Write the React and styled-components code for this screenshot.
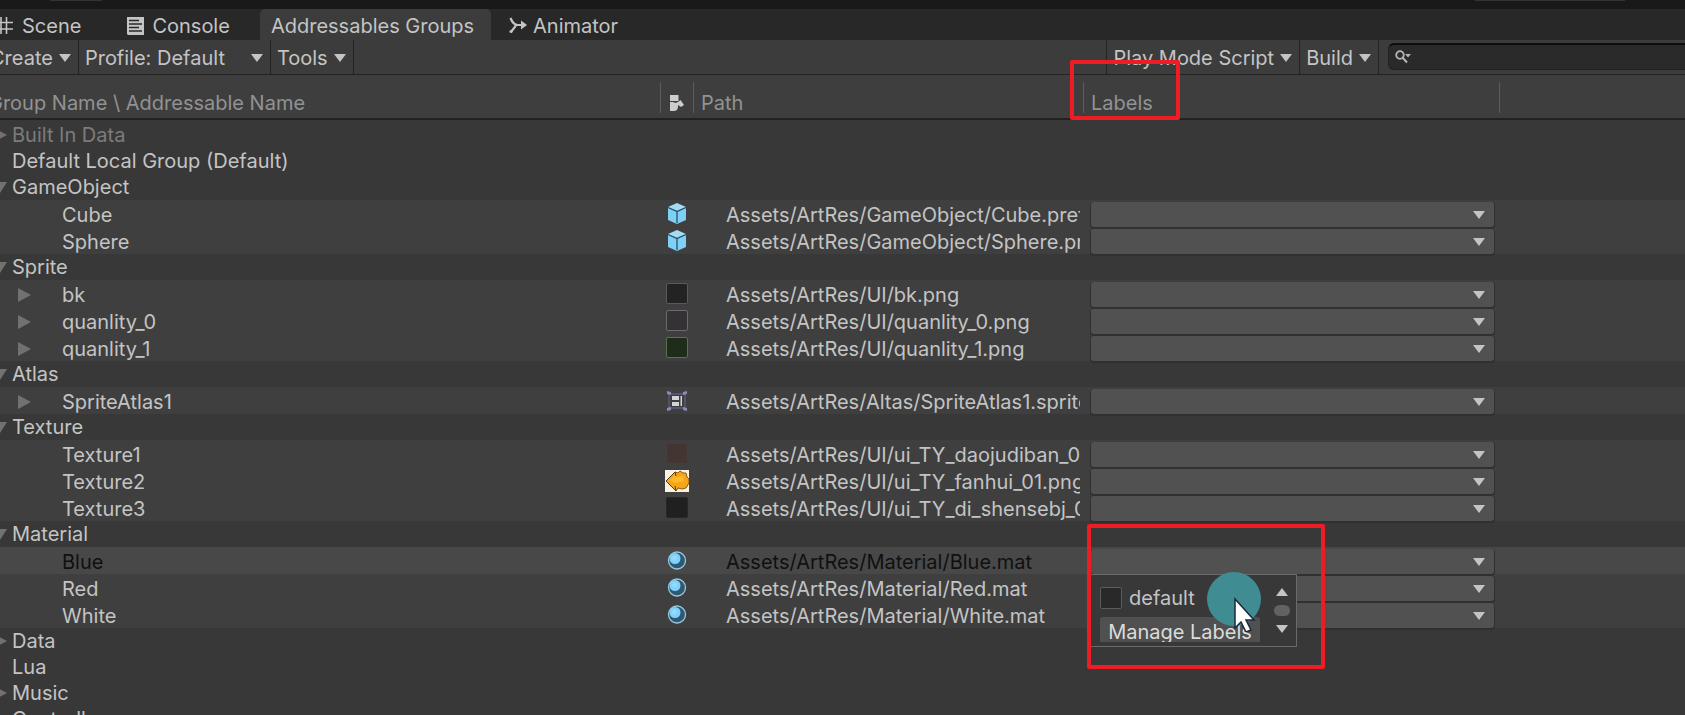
import React from "react";
import styled, { createGlobalStyle, css } from "styled-components";

const GlobalStyle = createGlobalStyle`
  body {
    margin: 0;
    background: #383838;
    overflow: hidden;
  }
  *, *::before, *::after { box-sizing: border-box; }
  button, input, select { font: inherit; color: inherit; }
`;

const Screen = styled.div`
  overflow: hidden;
  height: 100vh;
`;

const Panel = styled.div`
  margin-left: -16px;
  font-family: Inter, "Liberation Sans", sans-serif;
  font-size: 20px;
  line-height: 24px;
  color: #c4c4c4;
`;

const WindowEdge = styled.div`
  display: flex;
  justify-content: space-between;
  height: 9px;
  padding: 0 60px 0 66px;
  background: #191919;
`;

const EdgeTab = styled.span`
  width: ${(p) => p.$width}px;
  height: 1px;
  background: #333333;
`;

const TabBar = styled.nav`
  display: flex;
  height: 31px;
  background: #282828;
`;

const Tab = styled.button`
  display: flex;
  align-items: center;
  gap: ${(p) => p.$gap || 8}px;
  padding: 3px ${(p) => p.$end || 17}px 0 ${(p) => p.$start || 11}px;
  border: 0;
  border-radius: 5px 5px 0 0;
  background: ${(p) => (p.$active ? "#3c3c3c" : "transparent")};
  white-space: nowrap;
`;

const Toolbar = styled.div`
  display: flex;
  height: 35px;
  background: #3c3c3c;
  border-bottom: 1px solid #232323;
`;

const ToolButton = styled.button`
  display: flex;
  align-items: center;
  gap: 6px;
  padding: 2px 7px 0 6px;
  border: 0;
  border-right: 1px solid #232323;
  background: transparent;
  white-space: nowrap;
`;

const ProfileText = styled.span`
  margin-right: 20px;
`;

const Spacer = styled.div`
  flex: 1;
  border-right: 1px solid #232323;
`;

const SearchBox = styled.label`
  display: flex;
  align-items: center;
  gap: 4px;
  width: 321px;
  margin: 3px -24px 4px 9px;
  padding-left: 6px;
  border: 1px solid #212121;
  border-top: 2px solid #0d0d0d;
  border-radius: 6px;
  background: #2a2a2a;
`;

const SearchInput = styled.input`
  flex: 1;
  min-width: 0;
  border: 0;
  outline: 0;
  background: transparent;
`;

const Tree = styled.table`
  width: 100%;
  table-layout: fixed;
  border-collapse: separate;
  border-spacing: 0;
`;

const Col = styled.col`
  width: ${(p) => p.$width}px;
`;

const HeadCell = styled.th`
  position: relative;
  height: 45px;
  padding: 12px 0 0 ${(p) => (p.$first ? 4 : 8)}px;
  background: #3e3e3e;
  border-bottom: 2px solid #222222;
  color: #929292;
  font-weight: 400;
  text-align: left;
  white-space: nowrap;
  line-height: 24px;

  &:not(:first-child)::before {
    content: "";
    position: absolute;
    left: 0;
    top: 7px;
    width: 1px;
    height: 31px;
    background: #5c5c5c;
  }
  svg { display: block; margin-left: 2px; }
`;

const HeadGap = styled.tr`
  height: 2px;
`;

const cellBase = css`
  padding: 0;
  overflow: hidden;
  white-space: nowrap;
`;

const GroupRow = styled.tr`
  height: 26px;
  color: ${(p) => (p.$dim ? "#7c7c7c" : "inherit")};
`;

const EntryRow = styled.tr`
  height: 27px;
  background: ${(p) => (p.$selected ? "#484848" : "#3f3f3f")};
  color: ${(p) => (p.$selected ? "#101010" : "inherit")};
`;

const Cell = styled.td`
  ${cellBase}
`;

const GroupName = styled.div`
  display: flex;
  align-items: center;
  gap: 5px;
  height: 26px;
`;

const EntryName = styled.div`
  display: flex;
  align-items: center;
  gap: 31px;
  height: 27px;
  padding: 3px 0 0 32px;
`;

const Fold = styled.button`
  display: flex;
  justify-content: flex-end;
  width: ${(p) => (p.$entry ? 15 : 23)}px;
  padding: 0;
  border: 0;
  background: transparent;
`;

const IconBox = styled.div`
  display: flex;
  justify-content: center;
  align-items: center;
  height: 27px;
`;

const PathText = styled.div`
  height: 27px;
  margin: 0 3px 0 33px;
  padding-top: 3px;
  overflow: hidden;
  line-height: 24px;
`;

const LabelCell = styled.td`
  position: relative;
  padding: 0;
`;

const LabelBox = styled.div`
  display: flex;
  justify-content: flex-end;
  align-items: center;
  height: 27px;
  margin: 0 5px 0 8px;
  padding: 2px 0 0;
`;

const LabelSelect = styled.select`
  flex: 1;
  height: 25px;
  padding: 0 8px;
  appearance: none;
  border: 0;
  border-radius: 3px;
  background: #515151;
  box-shadow: 0 1px 0 1px #303030;
  outline: 0;
`;

const SelectArrow = styled.span`
  position: absolute;
  right: 14px;
  display: flex;
  pointer-events: none;
`;

const Popup = styled.div`
  position: absolute;
  z-index: 2;
  top: 27px;
  left: 7px;
  width: 207px;
  height: 73px;
  display: flex;
  justify-content: space-between;
  padding: 11px 6px 4px 9px;
  border: 1px solid #6a6a6a;
  background: #383838;
  color: #c4c4c4;
  overflow: hidden;
`;

const PopupList = styled.div`
  display: flex;
  flex-direction: column;
  gap: 8px;
  width: 160px;
  overflow: hidden;
`;

const Option = styled.label`
  display: flex;
  align-items: center;
  gap: 7px;
  height: 23px;
`;

const Check = styled.input`
  appearance: none;
  width: 22px;
  height: 22px;
  margin: 0;
  border: 1px solid #5c5c5c;
  border-radius: 2px;
  background: #292929;
`;

const ManageButton = styled.button`
  flex: none;
  height: 28px;
  padding: 2px 0 0;
  border: 0;
  border-radius: 3px;
  background: #505050;
  color: #dcdcdc;
  white-space: nowrap;
`;

const Scroller = styled.div`
  display: flex;
  flex-direction: column;
  align-items: center;
  justify-content: space-between;
  width: 16px;
  padding: 2px 0 9px;
`;

const Thumb = styled.span`
  width: 16px;
  height: 11px;
  border-radius: 6px;
  background: #626262;
`;

const Pointer = styled.svg`
  position: absolute;
  z-index: 3;
  left: 124px;
  top: 25px;
`;

const Mark = styled.div`
  position: absolute;
  z-index: 4;
  left: ${(p) => p.$left}px;
  top: ${(p) => p.$top}px;
  width: ${(p) => p.$width}px;
  height: ${(p) => p.$height}px;
  border: 4px solid #ee1c24;
  border-radius: 2px;
  pointer-events: none;
`;

const Down = () => (
  <svg width="12" height="8" viewBox="0 0 12 8" aria-hidden="true">
    <path d="M0 0H12L6 8Z" fill="#c4c4c4" />
  </svg>
);

const Up = () => (
  <svg width="12" height="8" viewBox="0 0 12 8" aria-hidden="true">
    <path d="M0 8H12L6 0Z" fill="#c4c4c4" />
  </svg>
);

const FoldClosed = () => (
  <svg width="13" height="14" viewBox="0 0 13 14" aria-hidden="true">
    <path d="M0 0L13 7L0 14Z" fill="#717171" />
  </svg>
);

const FoldOpen = () => (
  <svg width="14" height="11" viewBox="0 0 14 11" aria-hidden="true">
    <path d="M0 0H14L7 11Z" fill="#717171" />
  </svg>
);

const SceneIcon = () => (
  <svg width="18" height="18" viewBox="0 0 18 18" stroke="#c4c4c4" strokeWidth="1.600" aria-hidden="true">
    <path d="M5 0V17M10.500 0V17M0 5.500H17M0 12H17" />
  </svg>
);

const ConsoleIcon = () => (
  <svg width="17" height="18" viewBox="0 0 17 18" aria-hidden="true">
    <path d="M0 0H17V18H1L0 17Z" fill="#c4c4c4" />
    <path d="M2 3.500H12M2 7H15M2 10.500H12M2 14H15" stroke="#282828" strokeWidth="1.400" />
  </svg>
);

const AnimatorIcon = () => (
  <svg width="18" height="18" viewBox="0 0 18 18" fill="none" stroke="#c4c4c4" strokeWidth="2.200" aria-hidden="true">
    <path d="M1.500 1C3 5 6 8 9 8H14M2 15C3 13 5 12 7 8" />
    <path d="M12 3.500L18 8L12 12.500Z" fill="#c4c4c4" stroke="none" />
    <circle cx="2" cy="14.500" r="1.500" fill="#c4c4c4" stroke="none" />
  </svg>
);

const SearchIcon = () => (
  <svg width="17" height="14" viewBox="0 0 17 14" fill="none" stroke="#b4b4b4" aria-hidden="true">
    <circle cx="5" cy="5" r="3.800" strokeWidth="1.800" />
    <path d="M7.500 7.500L12 12.500" strokeWidth="2" />
    <path d="M10 4H16L13 7.500Z" fill="#b4b4b4" stroke="none" />
  </svg>
);

const TypeIcon = () => (
  <svg width="14" height="16" viewBox="0 0 14 16" aria-hidden="true">
    <path d="M0 0H8.500V6H0Z" fill="#cccccc" />
    <path d="M8 7L10.500 5L14 10L11 12L8 10Z" fill="#cccccc" />
    <path d="M0 7H3L5.500 8L8 7V12C8 14.500 6 16 4 16H0Z" fill="#cccccc" />
  </svg>
);

const CubeIcon = () => (
  <svg width="20" height="21" viewBox="0 0 20 21" aria-hidden="true">
    <path d="M10 0L19 4L10 8L1 4Z" fill="#a4dcf6" />
    <path d="M1 4L10 8V21L1 17Z" fill="#7fd0f6" />
    <path d="M19 4L10 8V21L19 17Z" fill="#7fd0f6" />
    <path d="M1 4.500L10 8.500L19 4.500M10 8.500V20" stroke="#25506b" strokeWidth="1.300" fill="none" />
  </svg>
);

const MaterialIcon = () => (
  <svg width="20" height="20" viewBox="0 0 20 20" aria-hidden="true">
    <circle cx="10" cy="9.500" r="8.500" fill="#2f5873" stroke="#9ac8dc" strokeWidth="1.300" />
    <circle cx="8" cy="7.500" r="5.500" fill="#7fd2fb" />
    <circle cx="7.500" cy="7" r="2.500" fill="#94dafd" />
  </svg>
);

const AtlasIcon = () => (
  <svg width="22" height="20" viewBox="0 0 22 20" aria-hidden="true">
    <path d="M3 3H19V17H3Z" stroke="#5c5c86" strokeWidth="1.300" fill="none" />
    <path d="M1 0L5 1V4L1 3ZM21 0L17 1V4L21 3ZM1 20L5 19V16L1 17ZM21 20L17 19V16L21 17Z" fill="#8c8cb0" />
    <path d="M6 5H13V9H6ZM6 11H13V15H6ZM14.500 5H16V15H14.500Z" fill="#d4d4d8" />
  </svg>
);

const ArrowThumb = () => (
  <svg width="24" height="22" viewBox="0 0 24 22" aria-hidden="true">
    <path d="M0 0H24V22H0Z" fill="#fbf3e0" />
    <path d="M1 11L10 2L13 3L15 1L18 3L21 3L22 7L24 9V13L21 18L17 19L13 18L11 21Z" fill="#f5a51a" stroke="#8a5a18" strokeWidth="1" />
    <path d="M5 10L10 6L12 7L18 6L19 11L10 13Z" fill="#ffb92a" />
    <path d="M1 11L10 2M1 11L11 21M10 2L11 6M10 16L11 21" stroke="#4c3c20" strokeWidth="1" />
  </svg>
);

const Swatch = styled.span`
  width: 22px;
  height: 21px;
  border: 1px solid ${(p) => p.$line};
  border-radius: 2px;
  background: ${(p) => p.$fill};
`;

const icons = {
  cube: <CubeIcon />,
  material: <MaterialIcon />,
  atlas: <AtlasIcon />,
  arrow: <ArrowThumb />,
  black: <Swatch $fill="#232323" $line="#5a5a5a" />,
  grey: <Swatch $fill="#343235" $line="#6c6a6c" />,
  green: <Swatch $fill="#1f2c1a" $line="#5a7252" />,
  brown: <Swatch $fill="#423532" $line="#473d3a" />,
  dark: <Swatch $fill="#202020" $line="#2a2626" />,
};

const rows = [
  { group: "Built In Data", fold: "closed", dim: true },
  { group: "Default Local Group (Default)" },
  { group: "GameObject", fold: "open" },
  { name: "Cube", icon: "cube", path: "Assets/ArtRes/GameObject/Cube.prefab" },
  { name: "Sphere", icon: "cube", path: "Assets/ArtRes/GameObject/Sphere.prefab" },
  { group: "Sprite", fold: "open" },
  { name: "bk", icon: "black", path: "Assets/ArtRes/UI/bk.png", fold: true },
  { name: "quanlity_0", icon: "grey", path: "Assets/ArtRes/UI/quanlity_0.png", fold: true },
  { name: "quanlity_1", icon: "green", path: "Assets/ArtRes/UI/quanlity_1.png", fold: true },
  { group: "Atlas", fold: "open" },
  { name: "SpriteAtlas1", icon: "atlas", path: "Assets/ArtRes/Altas/SpriteAtlas1.spriteatlas", fold: true },
  { group: "Texture", fold: "open" },
  { name: "Texture1", icon: "brown", path: "Assets/ArtRes/UI/ui_TY_daojudiban_01.png" },
  { name: "Texture2", icon: "arrow", path: "Assets/ArtRes/UI/ui_TY_fanhui_01.png" },
  { name: "Texture3", icon: "dark", path: "Assets/ArtRes/UI/ui_TY_di_shensebj_01.png" },
  { group: "Material", fold: "open" },
  { name: "Blue", icon: "material", path: "Assets/ArtRes/Material/Blue.mat", selected: true },
  { name: "Red", icon: "material", path: "Assets/ArtRes/Material/Red.mat" },
  { name: "White", icon: "material", path: "Assets/ArtRes/Material/White.mat" },
  { group: "Data", fold: "closed" },
  { group: "Lua" },
  { group: "Music", fold: "closed" },
  { group: "Controller", fold: "closed" },
];

function LabelsPopup() {
  return (
    <>
      <Popup>
        <PopupList>
          <Option>
            <Check type="checkbox" />
            default
          </Option>
          <ManageButton type="button">Manage Labels</ManageButton>
        </PopupList>
        <Scroller>
          <Up />
          <Thumb />
          <Down />
        </Scroller>
      </Popup>
      <Pointer width="56" height="60" viewBox="0 0 56 60" aria-hidden="true">
        <circle cx="27" cy="27" r="27" fill="#3f8d93" />
        <path d="M28 27V56L34 50L39 60L44 58L39 48H47Z" fill="#ffffff" stroke="#1a2a3a" strokeWidth="1.500" />
      </Pointer>
      <Mark $left={4} $top={-23} $width={238} $height={145} />
    </>
  );
}

function Entry({ row }) {
  return (
    <EntryRow $selected={row.selected}>
      <Cell>
        <EntryName>
          <Fold as={row.fold ? "button" : "span"} $entry aria-label={row.fold ? "Expand " + row.name : undefined}>
            {row.fold && <FoldClosed />}
          </Fold>
          {row.name}
        </EntryName>
      </Cell>
      <Cell>
        <IconBox>{icons[row.icon]}</IconBox>
      </Cell>
      <Cell>
        <PathText>{row.path}</PathText>
      </Cell>
      <LabelCell>
        <LabelBox>
          <LabelSelect aria-label={"Labels for " + row.name} />
          <SelectArrow>
            <Down />
          </SelectArrow>
        </LabelBox>
        {row.selected && <LabelsPopup />}
      </LabelCell>
      <Cell />
    </EntryRow>
  );
}

function Group({ row }) {
  return (
    <GroupRow $dim={row.dim}>
      <Cell colSpan={5}>
        <GroupName>
          <Fold as={row.fold ? "button" : "span"} aria-label={row.fold ? "Toggle " + row.group : undefined}>
            {row.fold === "open" && <FoldOpen />}
            {row.fold === "closed" && <FoldClosed />}
          </Fold>
          {row.group}
        </GroupName>
      </Cell>
    </GroupRow>
  );
}

export default function App() {
  return (
    <Screen>
      <GlobalStyle />
      <Panel>
        <WindowEdge>
          <EdgeTab $width={52} />
          <EdgeTab $width={150} />
        </WindowEdge>
        <TabBar>
          <Tab $start={12} $end={38}>
            <SceneIcon />
            Scene
          </Tab>
          <Tab $start={8} $end={30}>
            <ConsoleIcon />
            Console
          </Tab>
          <Tab $active>Addressables Groups</Tab>
          <Tab $start={18} $gap={6}>
            <AnimatorIcon />
            Animator
          </Tab>
        </TabBar>
        <Toolbar>
          <ToolButton>
            Create
            <Down />
          </ToolButton>
          <ToolButton>
            <ProfileText>Profile: Default</ProfileText>
            <Down />
          </ToolButton>
          <ToolButton>
            Tools
            <Down />
          </ToolButton>
          <Spacer />
          <ToolButton>
            Play Mode Script
            <Down />
          </ToolButton>
          <ToolButton>
            Build
            <Down />
          </ToolButton>
          <SearchBox>
            <SearchIcon />
            <SearchInput type="text" aria-label="Search" />
          </SearchBox>
        </Toolbar>
        <Tree>
          <colgroup>
            <Col $width={676} />
            <Col $width={33} />
            <Col $width={390} />
            <Col $width={416} />
            <col />
          </colgroup>
          <thead>
            <tr>
              <HeadCell $first>Group Name \ Addressable Name</HeadCell>
              <HeadCell aria-label="Asset type">
                <TypeIcon />
              </HeadCell>
              <HeadCell>Path</HeadCell>
              <HeadCell>
                Labels
                <Mark $left={-13} $top={-15} $width={110} $height={60} />
              </HeadCell>
              <HeadCell />
            </tr>
          </thead>
          <tbody>
            <HeadGap>
              <Cell colSpan={5} />
            </HeadGap>
            {rows.map((row) =>
              row.group ? <Group key={row.group} row={row} /> : <Entry key={row.name} row={row} />
            )}
          </tbody>
        </Tree>
      </Panel>
    </Screen>
  );
}
